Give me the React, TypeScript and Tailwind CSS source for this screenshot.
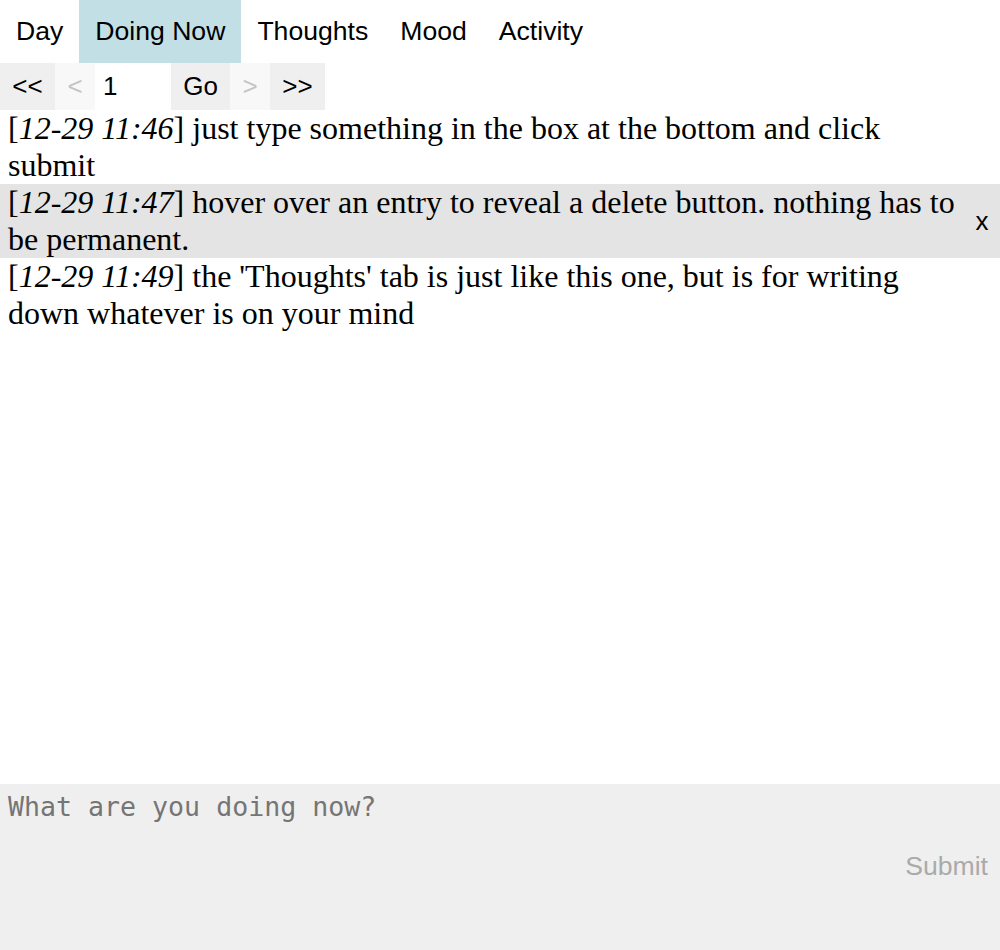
const TABS = ['Day', 'Doing Now', 'Thoughts', 'Mood', 'Activity']

const ENTRIES = [
  { time: '12-29 11:46', text: 'just type something in the box at the bottom and click submit' },
  { time: '12-29 11:47', text: 'hover over an entry to reveal a delete button. nothing has to be permanent.', hover: true },
  { time: '12-29 11:49', text: "the 'Thoughts' tab is just like this one, but is for writing down whatever is on your mind" },
]

const sans = "font-['Liberation_Sans',Arial,sans-serif]"

export default function App() {
  return (
    <div className={`flex h-[950px] flex-col bg-white text-black ${sans}`}>
      {/* tabs */}
      <div className="flex h-[63px] text-[26.6px]">
        {TABS.map(t => (
          <div
            key={t}
            className={`flex items-center px-4 ${t === 'Doing Now' ? 'bg-[#c2dfe5]' : ''}`}
          >
            {t}
          </div>
        ))}
      </div>

      {/* pager */}
      <div className="flex h-[47px] text-[26px]">
        <button className="w-[55px] bg-[#efefef]">&lt;&lt;</button>
        <button className="w-[40px] bg-[#f8f8f8] text-[#c4c4c4]">&lt;</button>
        <input
          className="w-[76px] bg-white px-2 text-[26px] outline-none"
          defaultValue="1"
        />
        <button className="w-[59px] bg-[#efefef]">Go</button>
        <button className="w-[40px] bg-[#f8f8f8] text-[#c4c4c4]">&gt;</button>
        <button className="w-[55px] bg-[#efefef]">&gt;&gt;</button>
      </div>

      {/* entries */}
      <div className="flex-1 font-['Liberation_Serif','Times_New_Roman',serif] text-[32px] leading-[37px]">
        {ENTRIES.map(e => (
          <div key={e.time} className={`flex items-center ${e.hover ? 'bg-[#e4e4e4]' : ''}`}>
            <div className="flex-1 pl-2">
              [<i>{e.time}</i>] {e.text}
            </div>
            <div className={`w-[36px] text-center text-[26px] ${sans} ${e.hover ? '' : 'invisible'}`}>x</div>
          </div>
        ))}
      </div>

      {/* input */}
      <div className="flex h-[166px] items-center bg-[#efefef]">
        <textarea
          className="h-full flex-1 resize-none bg-transparent px-2 pt-[3px] font-['DejaVu_Sans_Mono',monospace] text-[26.6px] leading-[40px] outline-none placeholder:text-[#757575]"
          placeholder="What are you doing now?"
        />
        <button className="pr-3 text-[26.6px] text-[#aaaaaa]">Submit</button>
      </div>
    </div>
  )
}
